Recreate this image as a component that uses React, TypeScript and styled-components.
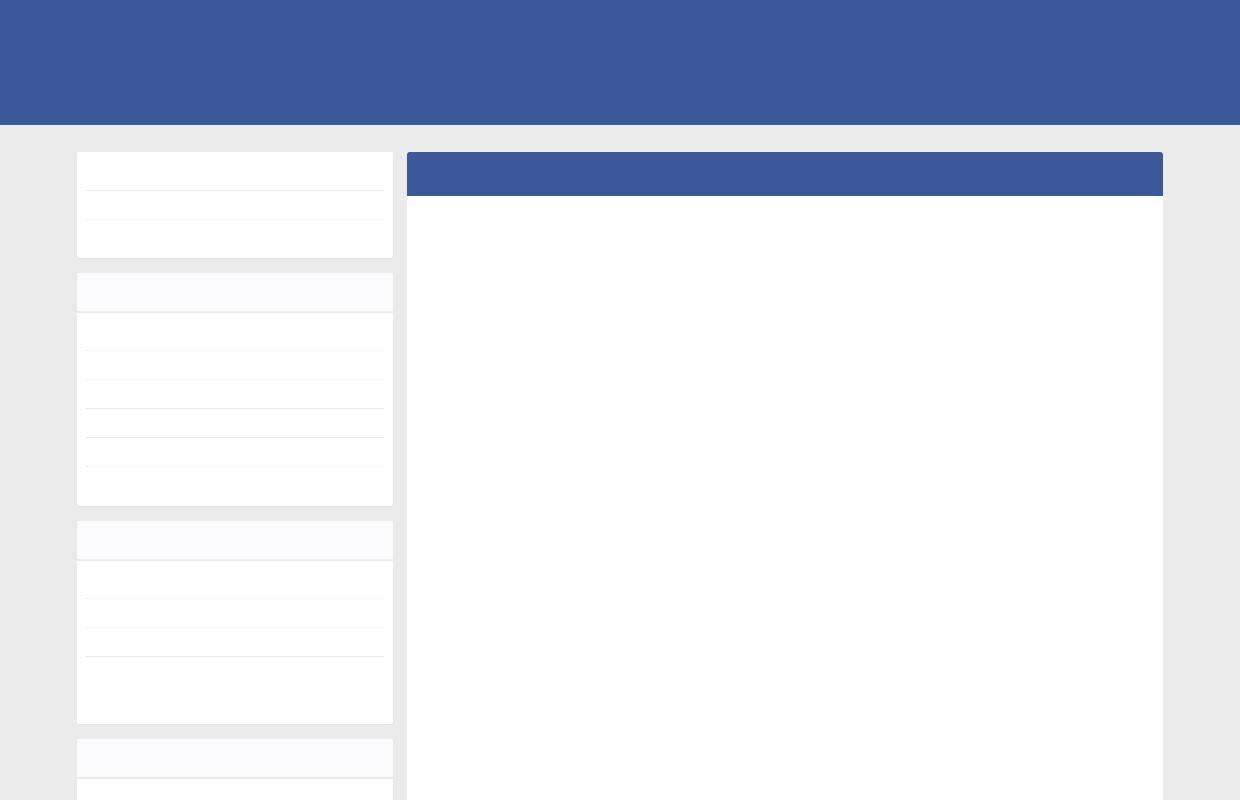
import styled, { createGlobalStyle } from "styled-components";

// "clear" keeps the row's 1px border slot but draws nothing, "none" drops it
type Line = "solid" | "dotted" | "clear" | "none";

interface SideCardProps {
  titled: boolean;
  rows: Line[];
}

const GlobalStyle = createGlobalStyle`
  html, body {
    margin: 0;
    padding: 0;
    background: #ebebeb;
    font-family: "Liberation Sans", Arial, sans-serif;
  }
`;

function SideCard(props: SideCardProps) {
  return (
    <Card>
      {props.titled && <CardHead />}
      <CardBody titled={props.titled}>
        {props.rows.map((line, i) => (
          <Row key={i} line={line} />
        ))}
      </CardBody>
    </Card>
  );
}

export default function App() {
  return (
    <>
      <GlobalStyle />
      <TopBar />
      <Main>
        <Sidebar>
          <SideCard titled={false} rows={["solid", "dotted", "clear"]} />
          <SideCard
            titled
            rows={["dotted", "dotted", "solid", "solid", "dotted", "clear"]}
          />
          <SideCard titled rows={["dotted", "dotted", "solid", "clear", "none"]} />
          <SideCard titled rows={["dotted", "dotted", "solid", "clear"]} />
        </Sidebar>
        <Panel>
          <PanelHead />
          <PanelBody />
        </Panel>
      </Main>
    </>
  );
}

const TopBar = styled.header`
  height: 125px;
  background: #3b5998;
`;

const Main = styled.main`
  width: 1086px;
  margin: 27px auto 0;
  display: flex;
  align-items: flex-start;
  gap: 14px;
`;

const Sidebar = styled.aside`
  width: 316px;
  flex-shrink: 0;
  display: flex;
  flex-direction: column;
  gap: 15px;
`;

const Card = styled.section`
  background: #fff;
  border-radius: 2px;
  box-shadow: 0 1px 2px rgba(0, 0, 0, 0.05);
  overflow: hidden;
`;

const CardHead = styled.div`
  height: 38px;
  background: #fbfbfd;
  border-bottom: 2px solid #ececef;
`;

const CardBody = styled.ul<{ titled: boolean }>`
  list-style: none;
  margin: 0;
  padding: ${(p) => (p.titled ? "9px 9px 10px" : "10px 9px 9px")};
`;

const Row = styled.li<{ line: Line }>`
  height: 28px;
  border-bottom: ${(p) =>
    p.line === "none"
      ? "0"
      : p.line === "clear"
      ? "1px solid transparent"
      : `1px ${p.line} #ececec`};
`;

const Panel = styled.section`
  flex: 1;
  background: #fff;
  border-radius: 3px 3px 0 0;
  overflow: hidden;
  min-height: 700px;
`;

const PanelHead = styled.div`
  height: 44px;
  background: #3b5998;
`;

const PanelBody = styled.div`
  min-height: 656px;
`;
